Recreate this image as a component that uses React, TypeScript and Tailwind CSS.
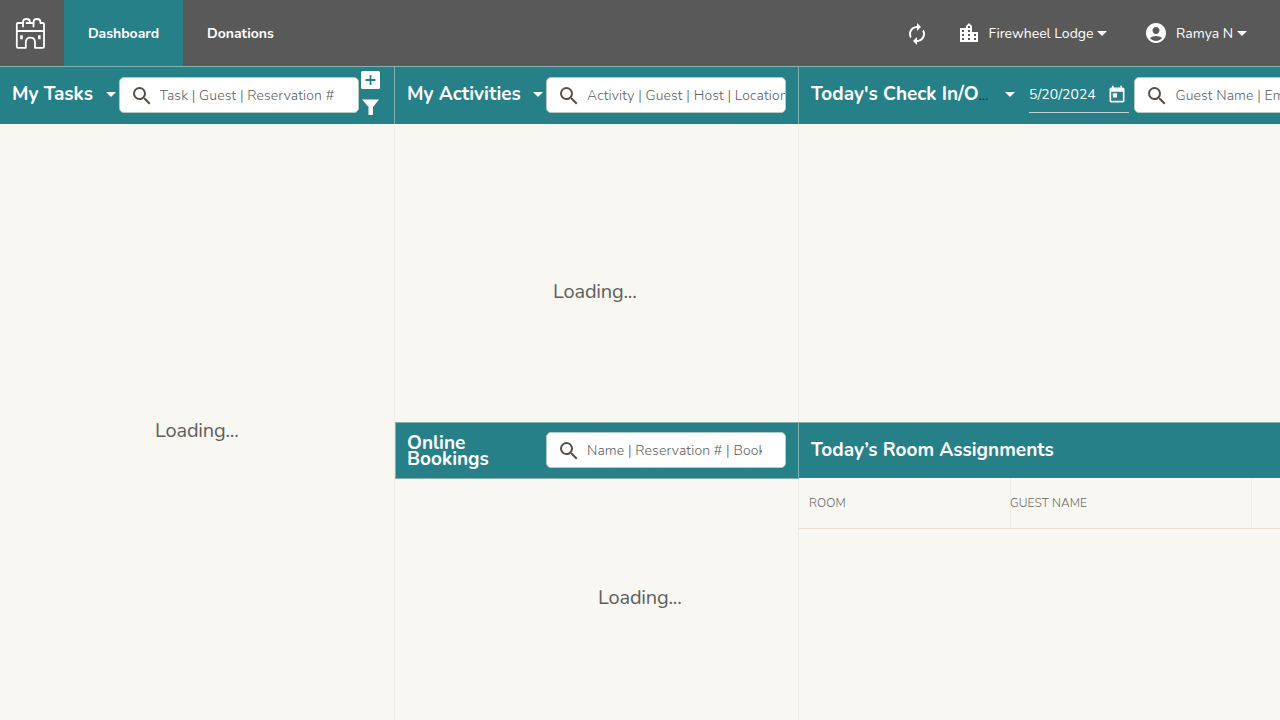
import type { ReactNode } from "react";
import { MdAutorenew, MdLocationCity, MdAccountCircle, MdSearch, MdToday, MdArrowDropDown } from "react-icons/md";

function Search({ text, clip = "w-[199px]", className = "" }: { text: string; clip?: string; className?: string }) {
  return (
    <div className={`flex h-9 w-60 shrink-0 items-center overflow-hidden rounded-[5px] border border-[#b5cbc1] bg-white pl-[10px] ${className}`}>
      <MdSearch className="mt-0.5 size-6 shrink-0 text-[#585047]" />
      <span className={`ml-[6px] shrink-0 overflow-hidden text-[14px] font-light tracking-[0.13px] whitespace-nowrap text-[#606060] ${clip}`}>{text}</span>
    </div>
  );
}

function Header({ children, className = "" }: { children: ReactNode; className?: string }) {
  return (
    <div className={`flex shrink-0 items-start border-t border-[#84b2b1] bg-[#268088] pl-3 text-white ${className}`}>{children}</div>
  );
}

function Castle() {
  return (
    <svg viewBox="0 0 32 34" className="h-[34px] w-8" fill="none" stroke="white" strokeWidth="1.8" strokeLinejoin="round" strokeLinecap="round">
      <path d="M8 7H3Q1.800 7 1.800 8.200V30.500Q1.800 31.800 3.100 31.800H10.800V26.500Q10.800 21.700 15.400 21.700Q20 21.700 20 26.500V31.800H27.700Q29 31.800 29 30.500V8.200Q29 7 27.800 7H25.500M11.500 7H18.500M1.800 15H29" />
      <path d="M8 10.500V6.500Q8 3 11.500 3Q15 3 15 6.500M18.500 10.500V6.500Q18.500 3 22 3Q25.500 3 25.500 6.500" />
      <path d="M6.500 19.200V23.200M24.300 19.200V23.200" strokeWidth="2.600" strokeLinecap="butt" />
    </svg>
  );
}

export default function App() {
  return (
    <div className="flex h-[720px] w-[1280px] flex-col overflow-hidden bg-[#f8f7f2] font-['Nunito','Lato',sans-serif]">
      <nav className="flex h-[66px] shrink-0 items-center bg-[#595959] text-[14px] text-white">
        <div className="flex w-16 justify-center pr-[2px]"><Castle /></div>
        <div className="flex h-full w-[119px] items-center justify-center bg-[#268088] font-bold">Dashboard</div>
        <div className="ml-6 font-bold">Donations</div>
        <div className="ml-auto flex items-center">
          <MdAutorenew className="mt-0.5 size-6" />
          <MdLocationCity className="ml-7 size-6" />
          <span className="ml-2 w-[105.5px] whitespace-nowrap">Firewheel Lodge</span>
          <MdArrowDropDown className="-ml-1 size-6" />
          <MdAccountCircle className="ml-[30px] size-6" />
          <span className="ml-2 w-[58px] whitespace-nowrap">Ramya N</span>
          <MdArrowDropDown className="-ml-1 mr-[26px] size-6" />
        </div>
      </nav>
      <main className="flex min-h-0 flex-1">
        <section className="flex w-[395px] shrink-0 flex-col border-r border-[#efede8]">
          <Header className="-mr-px h-[58px] border-r">
            <h2 className="mt-[13px] w-[86.5px] shrink-0 text-[19px] leading-7 font-bold whitespace-nowrap">My Tasks</h2>
            <MdArrowDropDown className="-mr-1 mt-[15px] size-6 shrink-0" />
            <Search text="Task | Guest | Reservation #" className="mt-[10px]" />
            <div className="mt-1 ml-[2.5px] flex flex-col gap-[10px]">
              <svg viewBox="0 0 19 18" className="h-[18px] w-[19px]"><rect width="19" height="18" rx="1.500" fill="white" /><path d="M9.500 4v10M4.500 9h10" stroke="#268088" strokeWidth="1.800" /></svg>
              <svg viewBox="0 0 19 17" className="h-[17px] w-[19px]"><path d="M1 0.500H18L12 8V16H7.500V8Z" fill="white" /></svg>
            </div>
          </Header>
          <div className="mt-[293px] pl-[155px] text-[20px] leading-7 tracking-[-0.2px] text-[#5f5f5f]">Loading...</div>
        </section>
        <section className="flex w-[404px] shrink-0 flex-col border-r border-[#efede8]">
          <Header className="-mr-px h-[58px] border-r">
            <h2 className="mt-[13px] w-[119px] shrink-0 text-[19px] leading-7 font-bold whitespace-nowrap">My Activities</h2>
            <MdArrowDropDown className="-mr-1 mt-[15px] size-6 shrink-0" />
            <Search text="Activity | Guest | Host | Location" className="mt-[10px]" />
          </Header>
          <div className="h-[298px] pt-[154px] pl-[158px] text-[20px] leading-7 tracking-[-0.2px] text-[#5f5f5f]">Loading...</div>
          <Header className="-mr-px h-[57px] border border-l-[#84b2b1] pl-[11px]">
            <h2 className="mt-3 w-[139px] shrink-0 text-[19px] leading-4 font-bold">Online<br />Bookings</h2>
            <Search text="Name | Reservation # | Book" clip="w-[175px]" className="mt-[9px]" />
          </Header>
          <div className="pt-[105px] pl-[203px] text-[20px] leading-7 tracking-[-0.2px] text-[#5f5f5f]">Loading...</div>
        </section>
        <section className="flex min-w-0 flex-1 flex-col">
          <Header className="h-[58px]">
            <h2 className="mt-[13px] w-[187px] shrink-0 text-[19px] leading-7 font-bold whitespace-nowrap">Today's Check In/O<span className="text-[14px] font-normal text-[#222]">...</span></h2>
            <MdArrowDropDown className="mt-[15px] size-6 shrink-0" />
            <div className="mt-[10px] mr-[5.4px] ml-[7px] flex h-9 w-[100px] shrink-0 items-center border-b border-[#c4cfcb] text-[14px]"><span className="w-[78px]">5/20/2024</span><MdToday className="size-5" /></div>
            <Search text="Guest Name | Email" className="mt-[10px]" />
          </Header>
          <div className="h-[298px]" />
          <Header className="h-[56px]"><h2 className="mt-[13px] text-[19px] leading-7 font-bold">Today’s Room Assignments</h2></Header>
          <div className="flex h-[51px] border-b border-[#e8dfcd] text-[12px] leading-[50px] font-light tracking-[0.1px] text-[#666]"><div className="w-[212px] border-r border-[#efede8] pl-[10px]">ROOM</div><div className="-ml-px w-[242px] border-r border-[#efede8]">GUEST NAME</div></div>
        </section>
      </main>
    </div>
  );
}
